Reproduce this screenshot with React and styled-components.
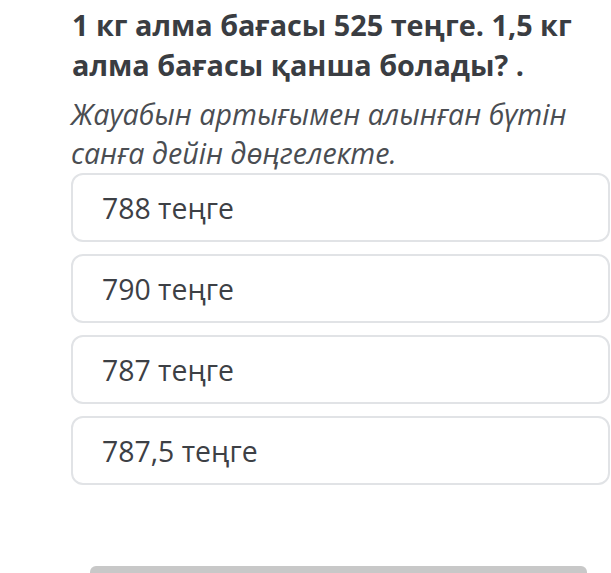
import React from "react";
import styled, { createGlobalStyle } from "styled-components";

const Global = createGlobalStyle`
  html, body { margin: 0; padding: 0; background: #fff; }
  body { font-family: "Open Sans", "Noto Sans", sans-serif; overflow: hidden; }
`;

const Page = styled.div`
  width: 611px;
  height: 573px;
  position: relative;
  overflow: hidden;
  box-sizing: border-box;
  padding: 5px 0 0 71px;
  display: flex;
  flex-direction: column;
`;

const Title = styled.h1`
  margin: 0 0 0 1px;
  font-size: 28.8px;
  line-height: 40px;
  font-weight: 700;
  color: #3a3d42;
`;

const Hint = styled.p`
  margin: 9px 0 0 0;
  font-size: 28.6px;
  line-height: 39px;
  font-style: italic;
  font-weight: 400;
  color: #4a4d52;
`;

const Options = styled.div`
  margin-top: 1px;
  display: flex;
  flex-direction: column;
  gap: 12px;
`;

const Option = styled.div`
  box-sizing: border-box;
  width: 539px;
  height: 69px;
  border: 2px solid #e1e3e6;
  border-radius: 12px;
  display: flex;
  align-items: center;
  padding-left: 29px;
  font-size: 28.4px;
  color: #3d4045;
`;

const BottomBar = styled.div`
  position: absolute;
  left: 90px;
  top: 566px;
  width: 497px;
  height: 20px;
  background: #c8c8c8;
  border-radius: 6px 6px 0 0;
`;

const options = ["788 теңге", "790 теңге", "787 теңге", "787,5 теңге"];

export default function App() {
  return (
    <Page>
      <Global />
      <Title>1 кг алма бағасы 525 теңге. 1,5 кг алма бағасы қанша болады? .</Title>
      <Hint>Жауабын артығымен алынған бүтін санға дейін дөңгелекте.</Hint>
      <Options>
        {options.map((o) => (
          <Option key={o}>{o}</Option>
        ))}
      </Options>
      <BottomBar />
    </Page>
  );
}
